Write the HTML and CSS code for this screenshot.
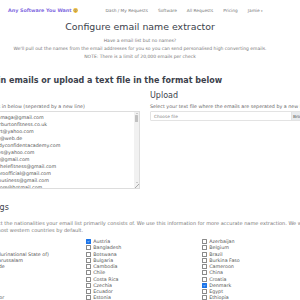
FILE: index.html
```html
<!DOCTYPE html>
<html>
<head>
  <meta charset="utf-8">
  <title>Configure email name extractor</title>
  <link rel="stylesheet" href="styles.css">
</head>
<body>
  <nav class="topbar">
    <a class="brand" href="#">Any Software You Want
      <svg class="nerd" viewBox="0 0 10 10" width="5" height="5">
        <circle cx="5" cy="5" r="4.8" fill="#f5c33b"/>
        <circle cx="3.3" cy="4.2" r="1.4" fill="#fff" stroke="#5a3a10" stroke-width="0.6"/>
        <circle cx="6.7" cy="4.2" r="1.4" fill="#fff" stroke="#5a3a10" stroke-width="0.6"/>
        <path d="M3.2 6.8 Q5 8.2 6.8 6.8" fill="none" stroke="#5a3a10" stroke-width="0.7"/>
      </svg>
    </a>
    <ul class="nav-links">
      <li>Dash / My Requests</li>
      <li>Software</li>
      <li>All Requests</li>
      <li>Pricing</li>
      <li>Jamie <span class="caret">&#9662;</span></li>
    </ul>
  </nav>

  <header class="intro">
    <h1>Configure email name extractor</h1>
    <p>Have a email list but no names?</p>
    <p>We'll pull out the names from the email addresses for you so you can send personalised high converting emails.</p>
    <p>NOTE: There is a limit of 20,000 emails per check</p>
  </header>

  <main class="page">
    <h2>Paste in emails or upload a text file in the format below</h2>

    <div class="input-grid">
      <h3 class="upload-title">Upload</h3>
      <label class="paste-label">Paste emails in below (seperated by a new line)</label>
      <label class="upload-label">Select your text file where the emails are seperated by a new line</label>

      <div class="email-box">
        <div class="email-lines">
          <div>jonathanmaga@gmail.com</div>
          <div>hi@peterburtonfitness.co.uk</div>
          <div>rob.stuart@yahoo.com</div>
          <div>kmueller@web.de</div>
          <div>info@bodyconfidentacademy.com</div>
          <div>mikejones@yahoo.com</div>
          <div>sarahlee@gmail.com</div>
          <div>teammichelefitness@gmail.com</div>
          <div>thegymbroofficial@gmail.com</div>
          <div>fitcoachbusiness@gmail.com</div>
          <div>davidmoore@hotmail.com</div>
        </div>
        <div class="scrollbar">
          <span class="arrow-up"></span>
          <span class="thumb"></span>
          <span class="track"></span>
          <span class="arrow-down"></span>
          <span class="grip"></span>
        </div>
      </div>

      <div class="file-input">
        <span class="file-name">Choose file</span>
        <span class="file-btn">Browse</span>
      </div>
    </div>

    <h2 class="settings-title">Settings</h2>
    <p class="settings-text">Please select the nationalities your email list primarily consists of. We use this information for more accurate name extraction. We will keep your list private.</p>
    <p class="settings-text">We select most western countries by default.</p>

    <div class="country-grid">
      <label class="country checked"><span class="box"></span>Australia</label>
      <label class="country checked"><span class="box"></span>Austria</label>
      <label class="country"><span class="box"></span>Azerbaijan</label>
      <label class="country"><span class="box"></span>Bahamas</label>

      <label class="country"><span class="box"></span>Bahrain</label>
      <label class="country"><span class="box"></span>Bangladesh</label>
      <label class="country"><span class="box"></span>Belgium</label>
      <label class="country"><span class="box"></span>Benin</label>

      <label class="country"><span class="box"></span>Bolivia (Plurinational State of)</label>
      <label class="country"><span class="box"></span>Botswana</label>
      <label class="country"><span class="box"></span>Brazil</label>
      <label class="country"><span class="box"></span>British Indian Ocean Territory</label>

      <label class="country"><span class="box"></span>Brunei Darussalam</label>
      <label class="country"><span class="box"></span>Bulgaria</label>
      <label class="country"><span class="box"></span>Burkina Faso</label>
      <label class="country"><span class="box"></span>Burundi</label>

      <label class="country"><span class="box"></span>Cabo Verde</label>
      <label class="country"><span class="box"></span>Cambodia</label>
      <label class="country"><span class="box"></span>Cameroon</label>
      <label class="country checked"><span class="box"></span>Canada</label>

      <label class="country"><span class="box"></span>Chad</label>
      <label class="country"><span class="box"></span>Chile</label>
      <label class="country"><span class="box"></span>China</label>
      <label class="country"><span class="box"></span>Colombia</label>

      <label class="country"><span class="box"></span>Congo</label>
      <label class="country"><span class="box"></span>Costa Rica</label>
      <label class="country"><span class="box"></span>Croatia</label>
      <label class="country"><span class="box"></span>Cuba</label>

      <label class="country"><span class="box"></span>Cyprus</label>
      <label class="country"><span class="box"></span>Czechia</label>
      <label class="country checked"><span class="box"></span>Denmark</label>
      <label class="country"><span class="box"></span>Djibouti</label>

      <label class="country"><span class="box"></span>Dominica</label>
      <label class="country"><span class="box"></span>Ecuador</label>
      <label class="country"><span class="box"></span>Egypt</label>
      <label class="country"><span class="box"></span>Eritrea</label>

      <label class="country"><span class="box"></span>El Salvador</label>
      <label class="country"><span class="box"></span>Estonia</label>
      <label class="country"><span class="box"></span>Ethiopia</label>
      <label class="country"><span class="box"></span>Fiji</label>
    </div>
  </main>
</body>
</html>
```

FILE: styles.css
```css
html, body {
  margin: 0;
  height: 100%;
}
body {
  background: #fff;
  font-family: "DejaVu Sans", sans-serif;
  color: #666;
  overflow: hidden;
}
h1, h2, h3, p, ul {
  margin: 0;
}

/* top navigation */
.topbar {
  height: 20px;
  display: flex;
  align-items: center;
  padding: 0 0 0 8px;
}
.brand {
  display: flex;
  align-items: center;
  gap: 1px;
  font-size: 4.8px;
  font-weight: bold;
  color: #8068e0;
  text-decoration: none;
}
.nerd {
  display: block;
}
.nav-links {
  display: flex;
  gap: 10px;
  list-style: none;
  padding: 0;
  margin-left: 28px;
  font-size: 4.3px;
  color: #777;
}
.caret {
  font-size: 3px;
}

/* intro */
.intro {
  width: 280px;
  text-align: center;
  color: #777;
}
.intro h1 {
  margin-top: 1px;
  font-size: 9.4px;
  line-height: 12px;
  font-weight: 500;
  color: #3c424c;
}
.intro h1 + p {
  margin-top: 4px;
}
.intro p {
  font-size: 4.5px;
  line-height: 8px;
  white-space: nowrap;
}

/* main */
.page {
  width: 350px;
  margin-left: -30px;
}
.page h2 {
  margin-top: 15px;
  font-size: 8px;
  line-height: 10px;
  font-weight: bold;
  color: #3c424c;
  white-space: nowrap;
}
.input-grid {
  display: grid;
  grid-template-columns: 170px 170px;
  column-gap: 10px;
  grid-template-areas:
    ". upload"
    "plabel ulabel"
    "box file";
  align-items: start;
}
.upload-title {
  grid-area: upload;
  margin-top: 5px;
  font-size: 8px;
  line-height: 10px;
  font-weight: 500;
  color: #3c424c;
}
.paste-label, .upload-label {
  margin-top: 3px;
  font-size: 4.8px;
  line-height: 6px;
  color: #666;
  white-space: nowrap;
}
.paste-label { grid-area: plabel; }
.upload-label { grid-area: ulabel; }

.email-box {
  grid-area: box;
  margin-top: 1px;
  height: 78px;
  box-sizing: border-box;
  border: 1px solid #ddd;
  display: flex;
  overflow: hidden;
}
.email-lines {
  flex: 1;
  padding: 1.5px 0 0 8px;
  font-size: 4.8px;
  line-height: 7.1px;
  color: #555;
  white-space: nowrap;
}
.scrollbar {
  width: 5px;
  background: #f1f1f1;
  display: flex;
  flex-direction: column;
  align-items: center;
}
.arrow-up, .arrow-down {
  width: 0;
  height: 0;
  margin: 1px 0;
  border-left: 1.2px solid transparent;
  border-right: 1.2px solid transparent;
}
.arrow-up { border-bottom: 1.4px solid #a3a3a3; }
.arrow-down { border-top: 1.4px solid #a3a3a3; }
.thumb {
  width: 3.5px;
  height: 7px;
  background: #c1c1c1;
  border-radius: 0.5px;
}
.track { flex: 1; }
.grip {
  width: 5px;
  height: 4px;
  background: linear-gradient(135deg, transparent 55%, #aaa 55%, #aaa 65%, transparent 65%);
}

.file-input {
  grid-area: file;
  margin-top: 1px;
  height: 10px;
  box-sizing: border-box;
  border: 1px solid #e3e3e3;
  border-radius: 1px;
  display: flex;
  align-items: center;
  font-size: 4.3px;
  color: #888;
}
.file-name {
  flex: 1;
  padding-left: 3px;
}
.file-btn {
  width: 26px;
  align-self: stretch;
  display: flex;
  align-items: center;
  padding-left: 1px;
  background: #e9ecef;
  border-left: 1px solid #e3e3e3;
  color: #555;
}

/* settings */
.page .settings-title {
  margin: 14px 0 0 6px;
  font-weight: normal;
}
.settings-text {
  font-size: 5px;
  line-height: 7px;
  color: #777;
  white-space: nowrap;
}
.settings-title + .settings-text {
  margin-top: 7px;
}
.country-grid {
  margin-top: 4.5px;
  display: grid;
  grid-template-columns: repeat(4, 116px);
}
.country {
  display: flex;
  align-items: center;
  gap: 2px;
  height: 6.25px;
  font-size: 4.8px;
  color: #555;
  white-space: nowrap;
}
.box {
  width: 3.2px;
  height: 3.2px;
  border: 0.5px solid #8a8a8a;
  border-radius: 0.5px;
  flex: none;
  background: #fff;
}
.country.checked .box {
  border-color: #1a73e8;
  background: #1a73e8 url("data:image/svg+xml,%3Csvg xmlns='http://www.w3.org/2000/svg' viewBox='0 0 10 10'%3E%3Cpath d='M2 5.2 L4.2 7.4 L8 2.8' fill='none' stroke='white' stroke-width='1.8'/%3E%3C/svg%3E") center / 100% no-repeat;
}
```
